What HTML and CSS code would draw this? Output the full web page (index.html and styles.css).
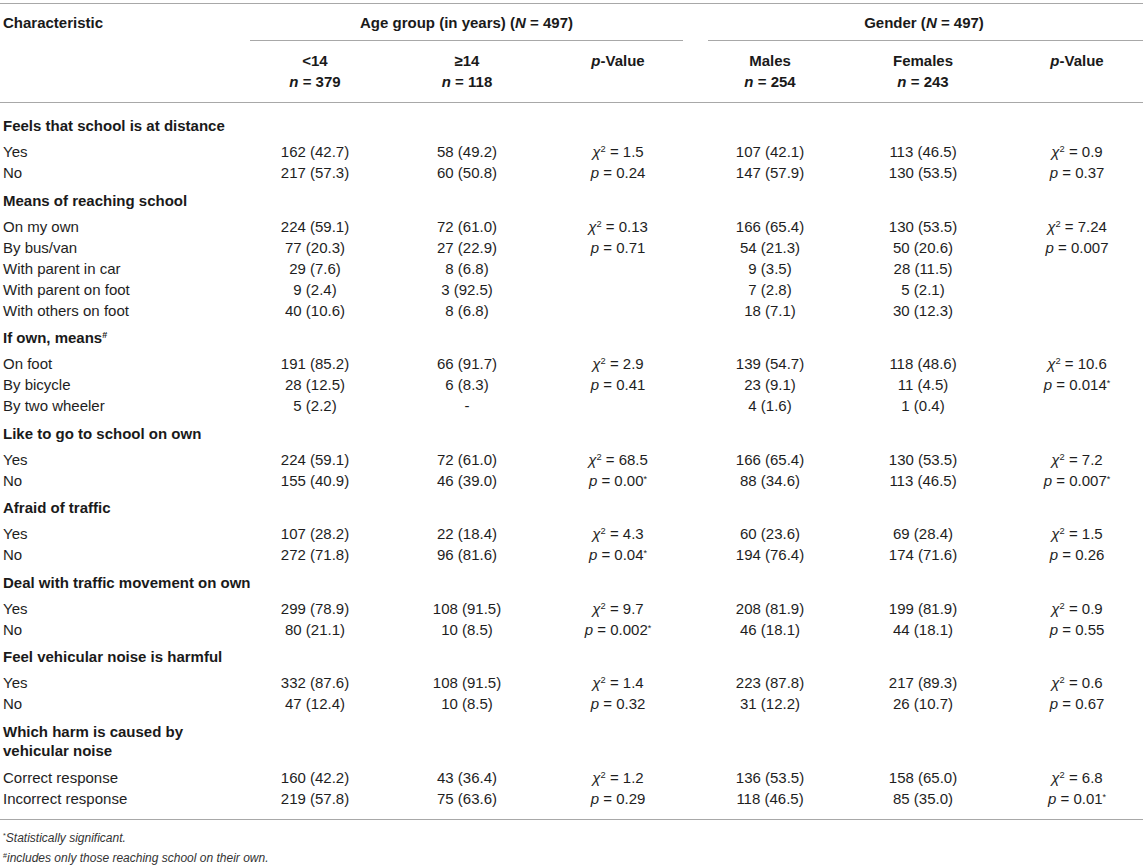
FILE: index.html
```html
<!DOCTYPE html>
<html lang="en">
<head>
<meta charset="utf-8">
<title>Table</title>
<link rel="stylesheet" href="styles.css">
</head>
<body>
<div class="frame">
<table class="data">
  <colgroup>
    <col class="c-label">
    <col class="c-a1">
    <col class="c-a2">
    <col class="c-a3">
    <col class="c-g1">
    <col class="c-g2">
    <col class="c-g3">
  </colgroup>
  <thead>
    <tr class="h1">
      <th rowspan="2" class="lbl">Characteristic</th>
      <th colspan="3"><div class="grp grp-age">Age group (in years) (<i>N</i> = 497)</div></th>
      <th colspan="3"><div class="grp grp-gen">Gender (<i>N</i> = 497)</div></th>
    </tr>
    <tr class="h2">
      <th>&lt;14<br><i>n</i> = 379</th>
      <th>≥14<br><i>n</i> = 118</th>
      <th><i>p</i>-Value</th>
      <th>Males<br><i>n</i> = 254</th>
      <th>Females<br><i>n</i> = 243</th>
      <th><i>p</i>-Value</th>
    </tr>
  </thead>
  <tbody>
    <tr class="sec first"><td colspan="7">Feels that school is at distance</td></tr>
    <tr><td>Yes</td><td>162 (42.7)</td><td>58 (49.2)</td><td><i>χ</i><sup>2</sup> = 1.5</td><td>107 (42.1)</td><td>113 (46.5)</td><td><i>χ</i><sup>2</sup> = 0.9</td></tr>
    <tr><td>No</td><td>217 (57.3)</td><td>60 (50.8)</td><td><i>p</i> = 0.24</td><td>147 (57.9)</td><td>130 (53.5)</td><td><i>p</i> = 0.37</td></tr>

    <tr class="sec"><td colspan="7">Means of reaching school</td></tr>
    <tr><td>On my own</td><td>224 (59.1)</td><td>72 (61.0)</td><td><i>χ</i><sup>2</sup> = 0.13</td><td>166 (65.4)</td><td>130 (53.5)</td><td><i>χ</i><sup>2</sup> = 7.24</td></tr>
    <tr><td>By bus/van</td><td>77 (20.3)</td><td>27 (22.9)</td><td><i>p</i> = 0.71</td><td>54 (21.3)</td><td>50 (20.6)</td><td><i>p</i> = 0.007</td></tr>
    <tr><td>With parent in car</td><td>29 (7.6)</td><td>8 (6.8)</td><td></td><td>9 (3.5)</td><td>28 (11.5)</td><td></td></tr>
    <tr><td>With parent on foot</td><td>9 (2.4)</td><td>3 (92.5)</td><td></td><td>7 (2.8)</td><td>5 (2.1)</td><td></td></tr>
    <tr><td>With others on foot</td><td>40 (10.6)</td><td>8 (6.8)</td><td></td><td>18 (7.1)</td><td>30 (12.3)</td><td></td></tr>

    <tr class="sec"><td colspan="7">If own, means<sup class="hash">#</sup></td></tr>
    <tr><td>On foot</td><td>191 (85.2)</td><td>66 (91.7)</td><td><i>χ</i><sup>2</sup> = 2.9</td><td>139 (54.7)</td><td>118 (48.6)</td><td><i>χ</i><sup>2</sup> = 10.6</td></tr>
    <tr><td>By bicycle</td><td>28 (12.5)</td><td>6 (8.3)</td><td><i>p</i> = 0.41</td><td>23 (9.1)</td><td>11 (4.5)</td><td><i>p</i> = 0.014<sup class="ast">*</sup></td></tr>
    <tr><td>By two wheeler</td><td>5 (2.2)</td><td>-</td><td></td><td>4 (1.6)</td><td>1 (0.4)</td><td></td></tr>

    <tr class="sec"><td colspan="7">Like to go to school on own</td></tr>
    <tr><td>Yes</td><td>224 (59.1)</td><td>72 (61.0)</td><td><i>χ</i><sup>2</sup> = 68.5</td><td>166 (65.4)</td><td>130 (53.5)</td><td><i>χ</i><sup>2</sup> = 7.2</td></tr>
    <tr><td>No</td><td>155 (40.9)</td><td>46 (39.0)</td><td><i>p</i> = 0.00<sup class="ast">*</sup></td><td>88 (34.6)</td><td>113 (46.5)</td><td><i>p</i> = 0.007<sup class="ast">*</sup></td></tr>

    <tr class="sec"><td colspan="7">Afraid of traffic</td></tr>
    <tr><td>Yes</td><td>107 (28.2)</td><td>22 (18.4)</td><td><i>χ</i><sup>2</sup> = 4.3</td><td>60 (23.6)</td><td>69 (28.4)</td><td><i>χ</i><sup>2</sup> = 1.5</td></tr>
    <tr><td>No</td><td>272 (71.8)</td><td>96 (81.6)</td><td><i>p</i> = 0.04<sup class="ast">*</sup></td><td>194 (76.4)</td><td>174 (71.6)</td><td><i>p</i> = 0.26</td></tr>

    <tr class="sec"><td colspan="7">Deal with traffic movement on own</td></tr>
    <tr><td>Yes</td><td>299 (78.9)</td><td>108 (91.5)</td><td><i>χ</i><sup>2</sup> = 9.7</td><td>208 (81.9)</td><td>199 (81.9)</td><td><i>χ</i><sup>2</sup> = 0.9</td></tr>
    <tr><td>No</td><td>80 (21.1)</td><td>10 (8.5)</td><td><i>p</i> = 0.002<sup class="ast">*</sup></td><td>46 (18.1)</td><td>44 (18.1)</td><td><i>p</i> = 0.55</td></tr>

    <tr class="sec"><td colspan="7">Feel vehicular noise is harmful</td></tr>
    <tr><td>Yes</td><td>332 (87.6)</td><td>108 (91.5)</td><td><i>χ</i><sup>2</sup> = 1.4</td><td>223 (87.8)</td><td>217 (89.3)</td><td><i>χ</i><sup>2</sup> = 0.6</td></tr>
    <tr><td>No</td><td>47 (12.4)</td><td>10 (8.5)</td><td><i>p</i> = 0.32</td><td>31 (12.2)</td><td>26 (10.7)</td><td><i>p</i> = 0.67</td></tr>

    <tr class="sec wrap"><td colspan="7">Which harm is caused by<br>vehicular noise</td></tr>
    <tr><td>Correct response</td><td>160 (42.2)</td><td>43 (36.4)</td><td><i>χ</i><sup>2</sup> = 1.2</td><td>136 (53.5)</td><td>158 (65.0)</td><td><i>χ</i><sup>2</sup> = 6.8</td></tr>
    <tr class="last"><td>Incorrect response</td><td>219 (57.8)</td><td>75 (63.6)</td><td><i>p</i> = 0.29</td><td>118 (46.5)</td><td>85 (35.0)</td><td><i>p</i> = 0.01<sup class="ast">*</sup></td></tr>
  </tbody>
</table>
<div class="notes">
  <p><sup class="ast">*</sup>Statistically significant.</p>
  <p><sup class="hash">#</sup>includes only those reaching school on their own.</p>
</div>
</div>
</body>
</html>
```
FILE: styles.css
```css
html, body {
  margin: 0;
  padding: 0;
  background: #fff;
  overflow: hidden;
}

body {
  font-family: "Liberation Sans", Arial, Helvetica, sans-serif;
  font-size: 15px;
  color: #1e1e1e;
}

.frame {
  width: 1143px;
  padding-top: 3px;
  overflow: hidden;
}

.data {
  width: 1156px;
  table-layout: fixed;
  border-collapse: collapse;
  border-top: 1px solid #a8a8a8;
}

.c-label { width: 240px; }
.c-a1 { width: 150px; }
.c-a2 { width: 154px; }
.c-a3 { width: 148px; }
.c-g1 { width: 156px; }
.c-g2 { width: 150px; }
.c-g3 { width: 158px; }

.data thead {
  border-bottom: 1px solid #a8a8a8;
}

.data th {
  font-weight: bold;
  text-align: center;
  vertical-align: top;
  padding: 0;
  color: #1a1a1a;
}

.h1 th {
  padding-top: 9px;
  line-height: 19px;
}

.h1 th.lbl {
  text-align: left;
  padding-left: 3px;
}

.grp {
  padding-bottom: 8px;
  border-bottom: 1px solid #a8a8a8;
}

.grp-age {
  margin: 0 9px 0 10px;
}

.grp-gen {
  margin: 0 0 0 16px;
  padding-right: 16px;
}

.h2 th {
  padding-top: 9px;
  padding-bottom: 10px;
  line-height: 21px;
}

.data td {
  padding: 1px 0;
  line-height: 19px;
  text-align: center;
  white-space: nowrap;
}

.data td:first-child {
  text-align: left;
  padding-left: 3px;
}

.data tr.sec td {
  font-weight: bold;
  color: #1a1a1a;
  padding-top: 7.5px;
  padding-bottom: 6px;
}

.data tr.sec.first td {
  padding-top: 13px;
}

.data tr.sec.wrap td {
  padding-bottom: 7px;
}

.data tr.last td {
  padding-bottom: 11px;
}

.data tbody {
  border-bottom: 1px solid #a8a8a8;
}

sup {
  font-size: 0.62em;
  line-height: 0;
  vertical-align: 0.55em;
}

sup.ast {
  font-size: 0.6em;
  vertical-align: 0.5em;
}

sup.hash {
  font-size: 0.6em;
}

.notes {
  padding-top: 8px;
  font-size: 12px;
  font-style: italic;
  color: #333;
}

.notes p {
  margin: 0;
  line-height: 20px;
  padding-left: 3px;
}

.notes sup {
  font-style: normal;
}
```
